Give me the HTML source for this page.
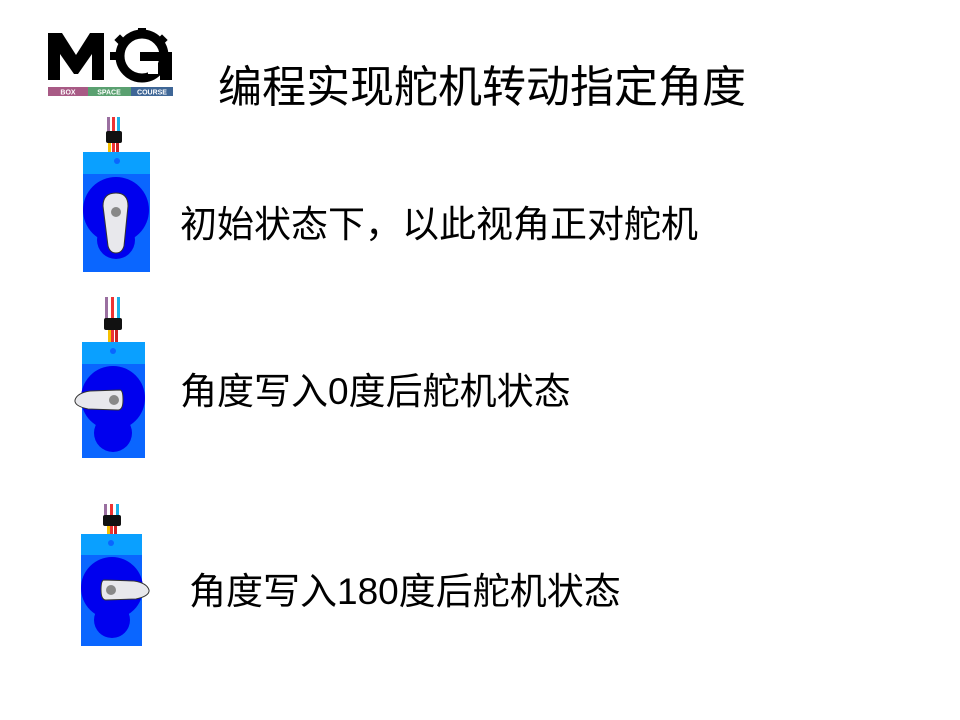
<!DOCTYPE html>
<html><head><meta charset="utf-8"><style>
body{margin:0;width:960px;height:720px;background:#fff;position:relative;overflow:hidden;font-family:"Liberation Sans","Noto Sans CJK SC",sans-serif}
.t{position:absolute;color:#000;white-space:nowrap;line-height:1}
</style></head><body>
<svg width="960" height="720" style="position:absolute;left:0;top:0">
<g>
<path d="M48 33 L62 33 L76 55 L90 33 L104 33 L104 80 L92 80 L92 54 L78 74 L74 74 L60 54 L60 80 L48 80 Z" fill="#000"/>
<g fill="#000">
<circle cx="142" cy="56" r="22" fill="none" stroke="#000" stroke-width="9"/>
<rect x="138" y="28" width="8" height="8"/><rect x="158" y="36" width="8" height="8" transform="rotate(45 162 40)"/>
<rect x="116" y="36" width="8" height="8" transform="rotate(45 120 40)"/>
<rect x="110" y="52" width="8" height="8"/>
<rect x="140" y="52" width="32" height="9"/>
<rect x="160" y="52" width="12" height="28"/>
</g>
<rect x="148" y="62" width="10" height="12" fill="#fff"/>
<rect x="48" y="87" width="40" height="9" fill="#a85a85"/>
<rect x="88" y="87" width="43" height="9" fill="#5aa070"/>
<rect x="131" y="87" width="42" height="9" fill="#3e6696"/>
<text x="68" y="94.5" font-size="7" fill="#fff" text-anchor="middle" font-weight="bold" font-family="Liberation Sans">BOX</text>
<text x="109" y="94.5" font-size="7" fill="#fff" text-anchor="middle" font-weight="bold" font-family="Liberation Sans">SPACE</text>
<text x="152" y="94.5" font-size="7" fill="#fff" text-anchor="middle" font-weight="bold" font-family="Liberation Sans">COURSE</text>
</g>
<g>
<rect x="107" y="117" width="3" height="20" fill="#9a6fa0"/><rect x="112" y="117" width="3" height="35" fill="#e33"/><rect x="117" y="117" width="3" height="20" fill="#1ab0e8"/>
<rect x="108" y="137" width="3" height="15" fill="#f5c000"/><rect x="116" y="137" width="3" height="15" fill="#c22"/>
<rect x="106" y="131" width="16" height="12" rx="2" fill="#111"/>
<rect x="83" y="152" width="67" height="120" fill="#0a66ff"/>
<rect x="83" y="152" width="67" height="22" fill="#0aa0ff"/>
<circle cx="117" cy="161" r="3" fill="#0a66ff"/>
<circle cx="116" cy="210" r="33" fill="#0000ee"/><circle cx="116" cy="240" r="19" fill="#0000ee"/>
<path d="M103 206 Q103 193 116 193 Q128 193 128 206 L124 246 Q122 253 116 253 Q110 253 108 246 Z" fill="#e8e8ec" stroke="#333" stroke-width="1"/>
<circle cx="116" cy="212" r="5" fill="#888"/>
</g>
<g>
<rect x="105" y="297" width="3" height="22" fill="#9a6fa0"/><rect x="111" y="297" width="3" height="45" fill="#e33"/><rect x="117" y="297" width="3" height="22" fill="#1ab0e8"/>
<rect x="108" y="329" width="3" height="13" fill="#f5c000"/><rect x="115" y="329" width="3" height="13" fill="#c22"/>
<rect x="104" y="318" width="18" height="12" rx="2" fill="#111"/>
<rect x="82" y="342" width="63" height="116" fill="#0a66ff"/>
<rect x="82" y="342" width="63" height="22" fill="#0aa0ff"/>
<circle cx="113" cy="351" r="3" fill="#0a66ff"/>
<circle cx="113" cy="398" r="32" fill="#0000ee"/><circle cx="113" cy="433" r="19" fill="#0000ee"/>
<path d="M120 390 Q123 390 123 400 Q123 410 118 410 L88 409 Q74 406 75 400 Q77 393 90 391 Z" fill="#e8e8ec" stroke="#333" stroke-width="1"/>
<circle cx="114" cy="400" r="5" fill="#888"/>
</g>
<g>
<rect x="104" y="504" width="3" height="18" fill="#9a6fa0"/><rect x="110" y="504" width="3" height="30" fill="#e33"/><rect x="116" y="504" width="3" height="18" fill="#1ab0e8"/>
<rect x="107" y="524" width="3" height="10" fill="#f5c000"/><rect x="114" y="524" width="3" height="10" fill="#c22"/>
<rect x="103" y="515" width="18" height="11" rx="2" fill="#111"/>
<rect x="81" y="534" width="61" height="112" fill="#0a66ff"/>
<rect x="81" y="534" width="61" height="21" fill="#0aa0ff"/>
<circle cx="111" cy="543" r="3" fill="#0a66ff"/>
<circle cx="112" cy="588" r="31" fill="#0000ee"/><circle cx="112" cy="620" r="18" fill="#0000ee"/>
<path d="M104 580 Q101 580 101 590 Q101 600 106 600 L136 599 Q150 596 149 590 Q147 583 134 581 Z" fill="#e8e8ec" stroke="#333" stroke-width="1"/>
<circle cx="111" cy="590" r="5" fill="#888"/>
</g>
</svg>
<div class="t" style="left:218px;top:66px;font-size:44px">编程实现舵机转动指定角度</div>
<div class="t" style="left:180px;top:206px;font-size:37px">初始状态下，以此视角正对舵机</div>
<div class="t" style="left:180px;top:373px;font-size:37px">角度写入0度后舵机状态</div>
<div class="t" style="left:189px;top:573px;font-size:37px">角度写入180度后舵机状态</div>
</body></html>
